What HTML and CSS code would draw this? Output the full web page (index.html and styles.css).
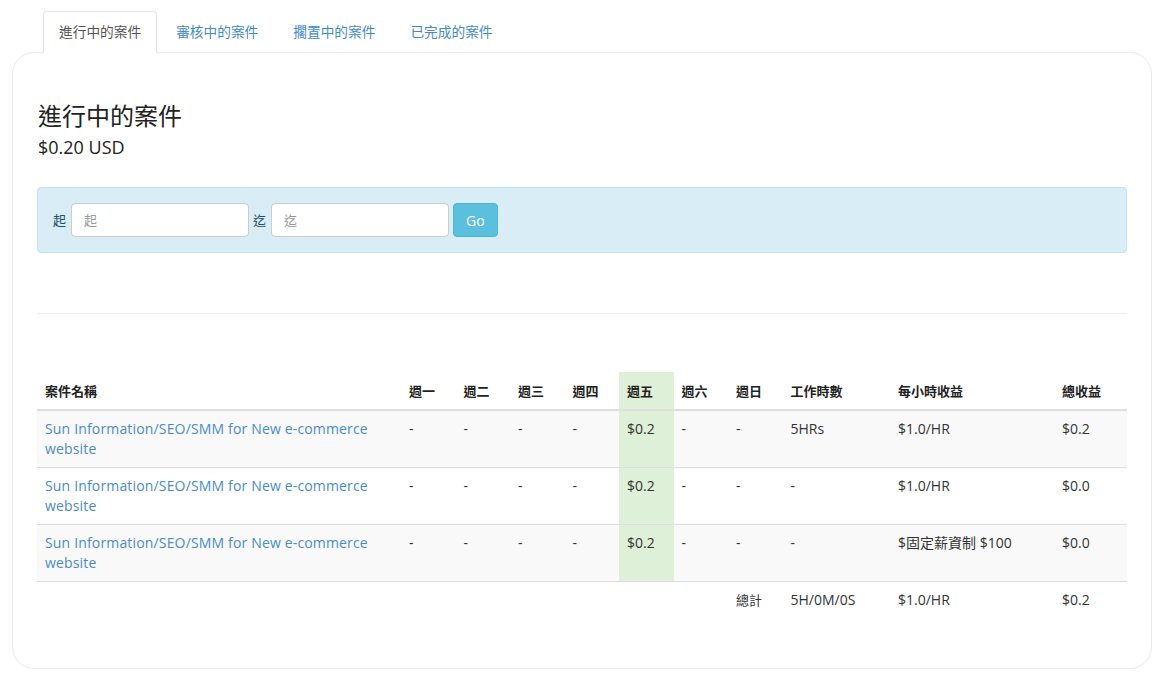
FILE: index.html
```html
<!DOCTYPE html>
<html lang="zh-Hant">
<head>
<meta charset="utf-8">
<title>進行中的案件</title>
<link rel="stylesheet" href="styles.css">
</head>
<body>
<div class="container">
  <ul class="tabs">
    <li class="tab active"><a>進行中的案件</a></li>
    <li class="tab"><a>審核中的案件</a></li>
    <li class="tab"><a>擱置中的案件</a></li>
    <li class="tab"><a>已完成的案件</a></li>
  </ul>
  <div class="panel">
    <h2 class="title">進行中的案件</h2>
    <div class="amount">$0.20 USD</div>
    <div class="alert">
      <form class="range">
        <label class="lbl">起</label>
        <input class="field" type="text" placeholder="起">
        <label class="lbl">迄</label>
        <input class="field" type="text" placeholder="迄">
        <button class="go" type="button">Go</button>
      </form>
    </div>
    <hr class="divider">
    <table class="grid">
      <colgroup>
        <col class="c-name"><col class="c-day"><col class="c-day"><col class="c-day"><col class="c-day"><col class="c-day"><col class="c-day"><col class="c-day"><col class="c-hours"><col class="c-rate"><col class="c-total">
      </colgroup>
      <thead>
        <tr>
          <th>案件名稱</th><th>週一</th><th>週二</th><th>週三</th><th>週四</th><th class="today">週五</th><th>週六</th><th>週日</th><th>工作時數</th><th>每小時收益</th><th>總收益</th>
        </tr>
      </thead>
      <tbody>
        <tr class="odd">
          <td><a class="link">Sun Information/SEO/SMM for New e-commerce website</a></td>
          <td>-</td><td>-</td><td>-</td><td>-</td><td class="today">$0.2</td><td>-</td><td>-</td><td>5HRs</td><td>$1.0/HR</td><td>$0.2</td>
        </tr>
        <tr>
          <td><a class="link">Sun Information/SEO/SMM for New e-commerce website</a></td>
          <td>-</td><td>-</td><td>-</td><td>-</td><td class="today">$0.2</td><td>-</td><td>-</td><td>-</td><td>$1.0/HR</td><td>$0.0</td>
        </tr>
        <tr class="odd">
          <td><a class="link">Sun Information/SEO/SMM for New e-commerce website</a></td>
          <td>-</td><td>-</td><td>-</td><td>-</td><td class="today">$0.2</td><td>-</td><td>-</td><td>-</td><td>$固定薪資制 $100</td><td>$0.0</td>
        </tr>
        <tr class="sum">
          <td></td><td></td><td></td><td></td><td></td><td></td><td></td><td class="sum-label">總計</td><td>5H/0M/0S</td><td>$1.0/HR</td><td>$0.2</td>
        </tr>
      </tbody>
    </table>
  </div>
</div>
</body>
</html>
```
FILE: styles.css
```css
* { box-sizing: border-box; }
html, body {
  margin: 0;
  padding: 0;
  background: #fff;
}
body {
  font-family: "Open Sans", "Noto Sans CJK TC", sans-serif;
  font-size: 14px;
  line-height: 20px;
  color: #333;
}
.container {
  width: 1140px;
  margin: 0 auto;
  padding-top: 11px;
}
.tabs {
  list-style: none;
  margin: 0;
  padding: 0 0 0 31px;
  display: flex;
  position: relative;
  z-index: 1;
  margin-bottom: -1px;
}
.tab {
  margin-right: 3px;
}
.tab a {
  display: block;
  height: 42px;
  padding: 10px 15px 0;
  font-size: 13.7px;
  line-height: 20px;
  color: #428bca;
  border: 1px solid transparent;
  border-bottom: none;
  border-radius: 4px 4px 0 0;
}
.tab.active a {
  color: #555;
  background: #fff;
  border-color: #e4e4e4;
}
.panel {
  border: 1px solid #ebebeb;
  border-radius: 22px;
  padding: 24px 24px 48px;
  background: #fff;
}
.title {
  margin: 24px 0 0;
  padding-left: 1px;
  font-size: 24px;
  line-height: 30px;
  font-weight: 400;
  color: #222;
}
.amount {
  font-size: 18px;
  line-height: 24px;
  margin-top: 4px;
  padding-left: 1px;
  color: #222;
}
.alert {
  margin-top: 28px;
  background: #d9edf7;
  border: 1px solid #bce8f1;
  border-radius: 4px;
  padding: 15px;
  height: 66px;
}
.range {
  display: flex;
  align-items: center;
  margin: 0;
}
.lbl {
  font-size: 13px;
  font-weight: 400;
  color: #1f4f68;
  margin-right: 5px;
}
.field {
  width: 178px;
  height: 34px;
  border: 1px solid #ccc;
  border-radius: 4px;
  padding: 6px 12px;
  font-family: inherit;
  font-size: 13px;
  color: #555;
  margin-right: 4px;
  background: #fff;
}
.field::placeholder { color: #999; }
.go {
  height: 34px;
  padding: 0 12px;
  font-family: inherit;
  font-size: 14px;
  color: #fff;
  background: #5bc0de;
  border: 1px solid #46b8da;
  border-radius: 4px;
}
.divider {
  margin: 60px 0 0;
  border: 0;
  border-top: 1px solid #eee;
}
.grid {
  margin-top: 58px;
  width: 100%;
  border-collapse: collapse;
  table-layout: fixed;
}
.c-name { width: 364px; }
.c-day { width: 54.5px; }
.c-hours { width: 107.5px; }
.c-rate { width: 164px; }
.c-total { width: 73px; }
.grid th {
  text-align: left;
  font-size: 13px;
  font-weight: 700;
  color: #222;
  padding: 8px;
  line-height: 20px;
  border-bottom: 2px solid #ddd;
  height: 38px;
  vertical-align: bottom;
}
.grid td {
  padding: 8px;
  vertical-align: top;
  border-top: 1px solid #ddd;
  line-height: 20px;
}
.grid thead + tbody tr:first-child td { border-top: 0; }
.grid tr.odd td { background: #f9f9f9; }
.grid .today,
.grid tr.odd td.today { background: #dff0d8; }
.link {
  color: #4a8bcb;
  text-decoration: none;
  letter-spacing: 0.16px;
}
.grid tr.sum td {
  height: 38px;
}
.sum-label { font-size: 13px; }
```
